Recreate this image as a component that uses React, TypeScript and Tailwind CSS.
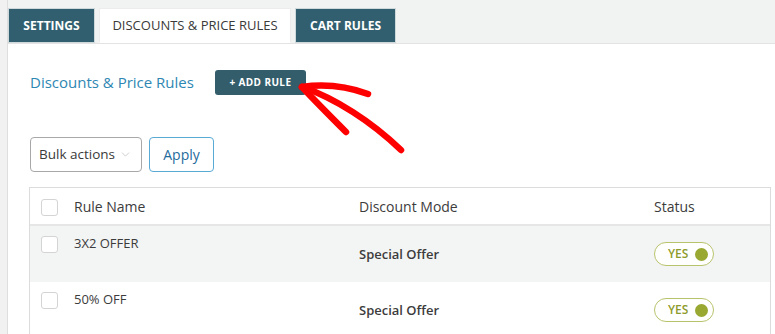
import { ChevronDown } from 'lucide-react';

const TABS = [
  { label: 'SETTINGS', active: false, w: 'w-[87px]' },
  { label: 'DISCOUNTS & PRICE RULES', active: true, w: 'w-[192px]' },
  { label: 'CART RULES', active: false, w: 'w-[101px]' },
];

const RULES = [
  { name: '3X2 OFFER', mode: 'Special Offer', striped: true },
  { name: '50% OFF', mode: 'Special Offer', striped: false },
];

function Checkbox() {
  return <span className="block w-[17px] h-[17px] bg-white border border-[#d4d4d4] rounded-[3px]" />;
}

function Toggle() {
  return (
    <span className="flex items-center justify-between w-[60px] h-[24px] pl-[13px] pr-[5px] rounded-full border border-[#b9c36c] bg-white">
      <span className="text-[12px] font-semibold text-[#8e9b2c]">YES</span>
      <span className="w-[13px] h-[13px] rounded-full bg-[#98a831]" />
    </span>
  );
}

export default function App() {
  return (
    <div className="relative min-h-screen bg-[#f1f1f1] pl-[7px] font-['Open_Sans',sans-serif] text-[#333]">
      <div className="border-l border-[#dedede] min-h-screen bg-white">
        {/* Tabs */}
        <div className="flex gap-[4px] pt-[8px] bg-[#f1f2f2] border-b border-[#e3e3e3]">
          {TABS.map((t) => (
            <div
              key={t.label}
              className={`${t.w} h-[35px] flex items-center justify-center border whitespace-nowrap ${
                t.active
                  ? 'bg-white text-[13px] text-[#3a3a3a] border-[#ececec] border-b-white -mb-px'
                  : 'bg-[#315f70] text-[12px] text-white font-bold border-[#cfd8da]'
              }`}
            >
              {t.label}
            </div>
          ))}
        </div>

        <div className="pl-[21px] pt-[26px]">
          {/* Heading */}
          <div className="flex items-center h-[25px]">
            <h1 className="text-[15px] text-[#2e87b3] pl-px">Discounts &amp; Price Rules</h1>
            <button className="ml-[21px] w-[91px] h-[25px] rounded-[3px] bg-[#335d6b] text-white text-[10px] font-bold tracking-[0.4px]">
              + ADD RULE
            </button>
          </div>

          {/* Bulk actions */}
          <div className="flex gap-[7px] mt-[42px] pl-px">
            <div className="flex items-center justify-between w-[112px] h-[35px] border border-[#a8a8a8] rounded-[4px] pl-[8px] pr-[9px] whitespace-nowrap">
              <span className="text-[13.5px] text-[#3a3a3a]">Bulk actions</span>
              <ChevronDown className="w-[13px] h-[13px] text-[#c4c4c4] shrink-0" strokeWidth={1.5} />
            </div>
            <button className="w-[65px] h-[35px] border border-[#5aaad6] rounded-[4px] text-[14px] text-[#1f6c9c]">
              Apply
            </button>
          </div>

          {/* Table */}
          <div className="mt-[15px] w-[742px] border border-[#dcdcdc] border-b-0">
            <div className="flex items-start h-[38px] border-b-2 border-[#e6e6e6] pt-[10px]">
              <div className="w-[44px] pl-[11px] pt-px">
                <Checkbox />
              </div>
              <div className="w-[285px] text-[14px] leading-[18px] text-[#3c3c3c]">Rule Name</div>
              <div className="w-[295px] text-[14px] leading-[18px] text-[#3c3c3c]">Discount Mode</div>
              <div className="text-[14px] leading-[18px] text-[#3c3c3c]">Status</div>
            </div>
            {RULES.map((r) => (
              <div
                key={r.name}
                className={`flex items-start h-[56px] pt-[9px] ${r.striped ? 'bg-[#f3f4f4]' : 'bg-white'}`}
              >
                <div className="w-[44px] pl-[11px] pt-px">
                  <Checkbox />
                </div>
                <div className="w-[285px] text-[13px] leading-[16px] text-[#3c3c3c]">{r.name}</div>
                <div className="w-[295px] pt-[11px] text-[13px] leading-[16px] font-semibold text-[#3c3c3c]">{r.mode}</div>
                <div className="pt-[7px]">
                  <Toggle />
                </div>
              </div>
            ))}
          </div>
        </div>
      </div>

      {/* Red annotation arrow */}
      <svg className="absolute left-0 top-0 pointer-events-none" width="775" height="334" viewBox="0 0 775 334">
        <g fill="none" stroke="#ff0000" strokeWidth="6.5" strokeLinecap="round" strokeLinejoin="round">
          <path d="M302 87 C 335 98, 372 122, 401 150" />
          <path d="M302 87 C 322 84, 346 86, 368 94" />
          <path d="M302 87 C 317 103, 332 118, 346 132" />
        </g>
      </svg>
    </div>
  );
}
